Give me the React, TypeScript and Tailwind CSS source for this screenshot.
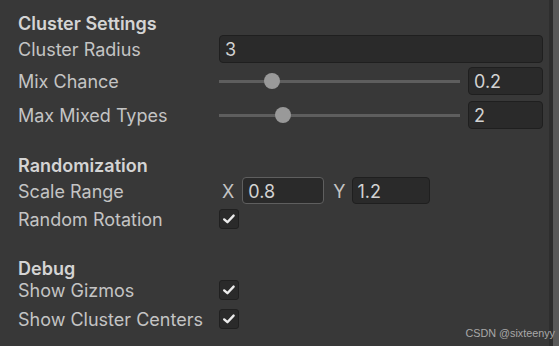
import React from "react";

const font = { fontFamily: "Inter, 'Noto Sans', sans-serif" };

function Check() {
  return (
    <div className="w-[20px] h-[20px] rounded-[3px] bg-[#2a2a2a] border border-[#202020] flex items-center justify-center">
      <svg width="14" height="12" viewBox="0 0 14 12">
        <path d="M2.2 6.4 L5.4 9.2 L11.6 2.6" stroke="#ececec" strokeWidth="2.4" fill="none" strokeLinecap="round" strokeLinejoin="round" />
      </svg>
    </div>
  );
}

function Field({ value, className = "", focused = false }: { value: string; className?: string; focused?: boolean }) {
  return (
    <div
      className={`h-full rounded-[4px] bg-[#2a2a2a] border ${focused ? "border-[#5f5f5f]" : "border-[#1f1f1f]"} flex items-center pl-[5px] pt-[2px] text-[#d2d2d2] ${className}`}
    >
      {value}
    </div>
  );
}

function Slider({ pos, value }: { pos: number; value: string }) {
  return (
    <div className="flex items-center h-full w-full">
      <div className="relative w-[241px] h-full flex items-center">
        <div className="w-full h-[3px] bg-[#5e5e5e]" />
        <div
          className="absolute w-[16px] h-[16px] rounded-full bg-[#999999] top-1/2 -translate-y-1/2"
          style={{ left: `${pos * 225}px` }}
        />
      </div>
      <div className="ml-[8px] w-[75px] h-full">
        <Field value={value} />
      </div>
    </div>
  );
}

function Row({ label, children, className = "" }: { label: string; children?: React.ReactNode; className?: string }) {
  return (
    <div className={`flex items-center ${className}`}>
      <div className="w-[201px] shrink-0 text-[#c4c4c4] pt-[2px]">{label}</div>
      <div className="flex-1 h-full flex items-center">{children}</div>
    </div>
  );
}

function Heading({ text, className = "" }: { text: string; className?: string }) {
  return <div className={`h-[22px] flex items-center pt-[3px] font-semibold text-[#d4d4d4] ${className}`}>{text}</div>;
}

export default function App() {
  return (
    <div className="relative w-[559px] h-[346px] bg-[#383838] flex overflow-hidden text-[18px] leading-none" style={font}>
      <div className="flex-1 flex flex-col pl-[18px] pr-[6px] pt-[11px]">
        <Heading text="Cluster Settings" />
        <Row label="Cluster Radius" className="mt-[2px] h-[28px]">
          <Field value="3" className="w-full" />
        </Row>
        <Row label="Mix Chance" className="mt-[4px] h-[28px]">
          <Slider pos={0.2} value="0.2" />
        </Row>
        <Row label="Max Mixed Types" className="mt-[6px] h-[28px]">
          <Slider pos={0.25} value="2" />
        </Row>

        <Heading text="Randomization" className="mt-[24px]" />
        <Row label="Scale Range" className="mt-[2px] h-[27px]">
          <span className="ml-[3px] pt-[2px] text-[#c4c4c4]">X</span>
          <div className="ml-[8px] w-[82px] h-full">
            <Field value="0.8" focused />
          </div>
          <span className="ml-[9px] pt-[2px] text-[#c4c4c4]">Y</span>
          <div className="ml-[6px] w-[78px] h-full">
            <Field value="1.2" />
          </div>
        </Row>
        <Row label="Random Rotation" className="mt-[1px] h-[28px]">
          <Check />
        </Row>

        <Heading text="Debug" className="mt-[23px]" />
        <Row label="Show Gizmos" className="h-[24px]">
          <Check />
        </Row>
        <Row label="Show Cluster Centers" className="mt-[5px] h-[24px]">
          <Check />
        </Row>
      </div>
      <div className="w-[4px] h-full bg-[#2e2e2e]" />
      <div className="w-[6px] h-full bg-[#595959]" />
      <div
        className="absolute right-[4px] bottom-[7px] text-[10.8px] leading-none text-[#a8a8a8]"
        style={{ fontFamily: "'Liberation Sans', Arial, sans-serif" }}
      >
        CSDN @sixteenyy
      </div>
    </div>
  );
}
